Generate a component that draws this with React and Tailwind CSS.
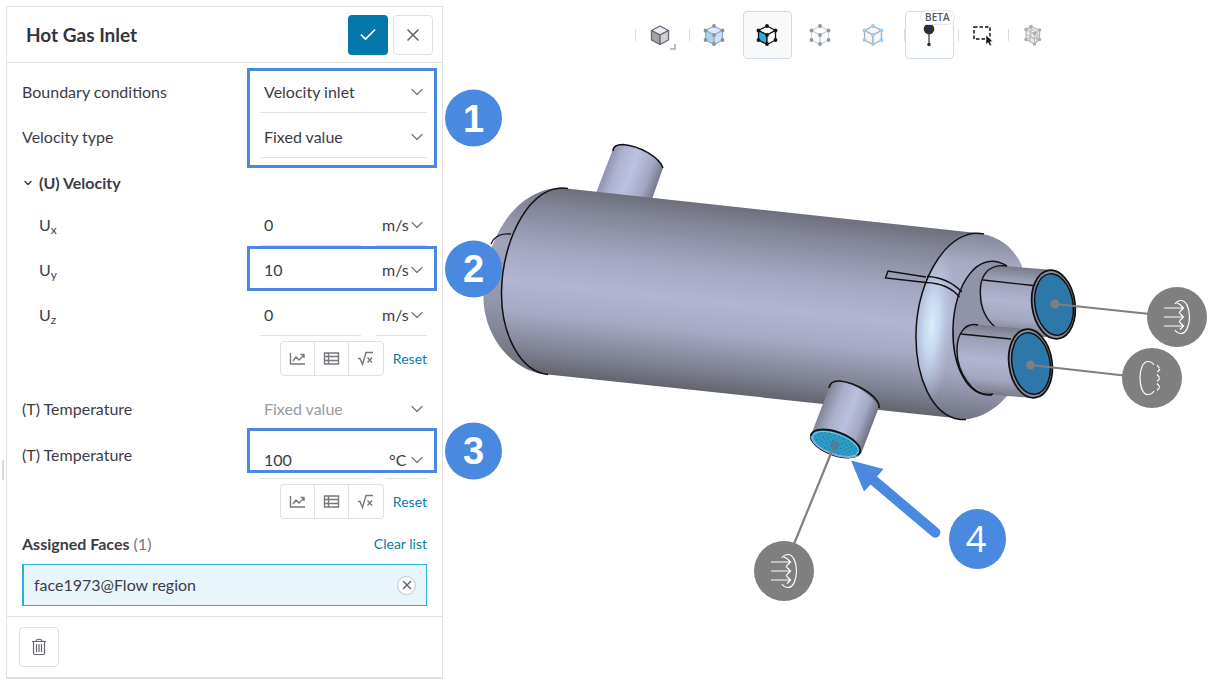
import React, { useState } from 'react';
import { Check, ChevronDown, X } from 'lucide-react';
import clsx from 'clsx';

const Callout = ({ number, className }) => (
  <div className={clsx('pointer-events-none absolute -right-2.5 z-10 w-[190px] border-[3px] border-[#4a89e0]', className)}>
    <span className="absolute left-full top-1/2 ml-[11px] flex size-[57px] -translate-y-1/2 items-center justify-center rounded-full bg-[#4a89e0] font-['Liberation_Sans',sans-serif] text-[38px] font-bold leading-none text-white">
      {number}
    </span>
  </div>
);

const SelectBox = ({ id, label, options, muted, className }) => (
  <div className={clsx('relative flex items-center', className)}>
    <select
      id={id}
      aria-label={label}
      className={clsx('h-full w-full appearance-none bg-transparent outline-none', muted ? 'text-[#9b9ba0]' : 'text-[#3c3c46]')}
    >
      {options.map((option) => (
        <option key={option}>{option}</option>
      ))}
    </select>
    <ChevronDown className="pointer-events-none absolute right-0 size-5 text-[#77777f]" strokeWidth={1.5} />
  </div>
);

const SelectRow = ({ id, label, options, muted }) => (
  <div className="flex h-[45px] items-stretch justify-between">
    <label htmlFor={id} className="flex items-center pt-[3px]">{label}</label>
    <SelectBox
      id={id}
      options={options}
      muted={muted}
      className={clsx('w-[167px] border-b pl-1 pt-[3px]', muted ? 'border-transparent' : 'border-[#e2e2e2]')}
    />
  </div>
);

const ValueRow = ({ id, label, value, unit, units, tall, indent, children }) => {
  const [current, setCurrent] = useState(value);

  return (
    <div className={clsx('relative flex items-stretch justify-between', tall ? 'h-[49px]' : 'h-[45px]')}>
      <label htmlFor={id} className={clsx('flex items-center', indent && 'pl-[17px] pt-[3px]')}>
        <span>{label}</span>
      </label>
      <div className={clsx('flex w-[167px] gap-[15px]', tall && 'pt-2')}>
        <input
          id={id}
          value={current}
          onChange={(e) => setCurrent(e.target.value)}
          className="w-0 min-w-0 flex-1 border-b border-[#e2e2e2] bg-transparent pl-1 pt-1 outline-none"
        />
        <SelectBox
          label={`${unit} unit`}
          options={units}
          className={clsx('border-b border-[#e2e2e2] pt-[3px]', tall ? 'w-[42px] pl-1' : 'w-[51px] pl-1.5')}
        />
      </div>
      {children}
    </div>
  );
};

const toolIcons = [
  {
    name: 'Edit as chart',
    draw: <path d="M1.500 3v11H16M4 11l3-4 3 3 5-5M11.500 4.500h3.500v3.500" />,
  },
  {
    name: 'Edit as table',
    draw: <path d="M1.500 3h14v11h-14zM5.500 3v11M1.500 6.500h14M1.500 10.500h14" />,
  },
  {
    name: 'Edit as formula',
    draw: <path d="M1 8.500h2l2.500 6L9 2.500h7M10.500 7.500l4.500 5M15 7.500l-4.500 5" />,
  },
];

const ToolRow = () => (
  <div className="mt-[5px] flex items-center justify-end text-[14px]">
    <div className="flex h-[35px] divide-x divide-[#e0e0e0] rounded border border-[#e0e0e0]">
      {toolIcons.map((icon) => (
        <button key={icon.name} type="button" aria-label={icon.name} className="flex w-[34px] items-center justify-center">
          <svg viewBox="0 0 17 17" className="size-[17px]" fill="none" stroke="#77777c" strokeWidth="1.400">
            {icon.draw}
          </svg>
        </button>
      ))}
    </div>
    <button type="button" className="ml-[9px] text-[#0a7cad]">Reset</button>
  </div>
);

const TrashIcon = () => (
  <svg viewBox="0 0 16 18" className="h-[18px] w-4" fill="none" stroke="#666672" strokeWidth="1.200">
    <path d="M1 3.500h14M5 3.500c0-3 6-3 6 0M2.500 3.500V15c0 1 .5 1.500 1.500 1.500h8c1 0 1.500-.5 1.500-1.500V3.500M5.500 6v8M8 6v8M10.500 6v8" />
  </svg>
);

const SettingsPanel = () => (
  <aside className="w-[437px] shrink-0 border border-b-2 border-[#e0e0e0] bg-white">
    <header className="flex h-14 items-center justify-between border-b border-[#e0e0e0] pl-[19px] pr-[9px]">
      <h1 className="text-[19px] font-bold text-[#34343e]">Hot Gas Inlet</h1>
      <div className="flex gap-[5px]">
        <button type="button" aria-label="Apply" className="flex size-10 items-center justify-center rounded bg-[#0478ab] text-white">
          <Check className="size-5" strokeWidth={2} />
        </button>
        <button type="button" aria-label="Close" className="flex size-10 items-center justify-center rounded border border-[#e0e0e0] text-[#666672]">
          <X className="size-5" strokeWidth={2} />
        </button>
      </div>
    </header>

    <div className="px-[15px] pb-2.5 pt-[5px]">
      <div className="relative">
        <SelectRow id="bc" label="Boundary conditions" options={['Velocity inlet', 'Pressure outlet', 'Wall']} />
        <SelectRow id="velocity-type" label="Velocity type" options={['Fixed value', 'Flow rate']} />
        <Callout number={1} className="-bottom-2.5 top-0" />
      </div>

      <button type="button" className="flex h-[43px] items-center gap-[5px] pt-1.5 font-bold">
        <ChevronDown className="size-3" strokeWidth={3} />
        (U) Velocity
      </button>
      <ValueRow id="ux" label={<>U<sub>x</sub></>} value="0" unit="Ux" units={['m/s', 'ft/s']} indent />
      <ValueRow id="uy" label={<>U<sub>y</sub></>} value="10" unit="Uy" units={['m/s', 'ft/s']} indent>
        <Callout number={2} className="inset-y-0" />
      </ValueRow>
      <ValueRow id="uz" label={<>U<sub>z</sub></>} value="0" unit="Uz" units={['m/s', 'ft/s']} indent />
      <ToolRow />

      <div className="mt-[9px]">
        <SelectRow id="temp-type" label="(T) Temperature" options={['Fixed value']} muted />
      </div>
      <ValueRow id="temp" label="(T) Temperature" value="100" unit="Temperature" units={['°C', 'K', '°F']} tall>
        <Callout number={3} className="bottom-1.5 -top-0.5" />
      </ValueRow>
      <ToolRow />

      <div className="flex h-[45px] items-center justify-between pt-1">
        <h2>
          <span className="font-bold">Assigned Faces</span> <span className="text-[#77777f]">(1)</span>
        </h2>
        <button type="button" className="text-[14px] text-[#0a7cad]">Clear list</button>
      </div>
      <div className="flex h-[42px] items-center justify-between border border-l-2 border-[#27b1dc] bg-[#e8f5fb] pl-2.5 pr-2.5">
        <span>face1973@Flow region</span>
        <button type="button" aria-label="Remove face" className="flex size-[19px] items-center justify-center rounded-full border border-[#c4c4c8] bg-white text-[#666672]">
          <X className="size-3.5" strokeWidth={2.5} />
        </button>
      </div>
    </div>

    <footer className="border-t border-[#e0e0e0] px-3 py-2.5">
      <button type="button" aria-label="Delete" className="flex size-10 items-center justify-center rounded border border-[#e0e0e0]">
        <TrashIcon />
      </button>
    </footer>
  </aside>
);

const CubeIcon = ({ line, top = 'none', left = 'none', right = 'none', dot }) => (
  <svg viewBox="0 0 22 22" className="size-[22px]" strokeLinejoin="round">
    <g stroke={line} strokeWidth="1.300">
      <path d="M11 2l8.500 4.500L11 11 2.500 6.500z" fill={top} />
      <path d="M2.500 6.500L11 11v9.500L2.500 16z" fill={left} />
      <path d="M19.500 6.500L11 11v9.500l8.500-4.500z" fill={right} />
    </g>
    {dot && (
      <g fill={dot}>
        {[[11, 2], [19.5, 6.5], [2.5, 6.5], [11, 11], [2.5, 16], [19.5, 16], [11, 20]].map(([x, y]) => (
          <circle key={`${x}-${y}`} cx={x} cy={y} r="1.900" />
        ))}
      </g>
    )}
  </svg>
);

const MeshIcon = () => (
  <svg viewBox="0 0 22 22" className="size-[22px]" strokeLinejoin="round">
    <path d="M9 2.500L17.500 6V15.500L12.500 20L4 15.500V5.500z" fill="#ececec" stroke="#b7b8ba" strokeWidth="1.200" />
    <path d="M4 5.500L12.500 9.500V20M12.500 9.500L17.500 6M9 2.500V13.500L4 15.500M9 13.500L17.500 15.500M4 10.500L12.500 15L17.500 11M8 7.500V17.500M6.500 4L15 8V17.500" fill="none" stroke="#b7b8ba" />
    <g fill="#adaeb0">
      {[[9, 2.5], [17.5, 6], [4, 5.5], [12.5, 9.5], [4, 15.500], [17.5, 15.5], [12.5, 20]].map(([x, y]) => (
        <circle key={`${x}-${y}`} cx={x} cy={y} r="1.800" />
      ))}
    </g>
  </svg>
);

const ToolButton = ({ label, active, children, className }) => (
  <button
    type="button"
    aria-label={label}
    className={clsx('relative flex h-12 w-[49px] items-center justify-center rounded border', active ? 'border-[#cbdcf2]' : 'border-transparent', className)}
  >
    {children}
  </button>
);

const Separator = () => <span className="h-3 w-px bg-[#dcdcdc]" />;

const Toolbar = () => (
  <nav className="flex items-center justify-center pl-[18px] pt-[11px]">
    <Separator />
    <ToolButton label="Render mode">
      <CubeIcon line="#66666e" top="#e9ebf2" left="#a3a3a6" right="#cfd0d4" />
      <svg viewBox="0 0 6 6" className="absolute bottom-2 right-2 size-1.5">
        <path d="M5 0v5H0" fill="none" stroke="#aaa" strokeWidth="1.500" />
      </svg>
    </ToolButton>
    <span className="w-1" />
    <Separator />
    <div className="flex gap-1">
      <ToolButton label="Select volumes">
        <CubeIcon line="#96acc8" top="#d9ebfa" left="#a6d4f2" right="#cfdff5" dot="#8d9096" />
      </ToolButton>
      <ToolButton label="Select faces" active className="bg-[#f9f9fa]">
        <CubeIcon line="#111" top="#fff" left="#27b1dc" right="#fff" dot="#111" />
      </ToolButton>
      <ToolButton label="Select nodes">
        <CubeIcon line="#c3d9f2" dot="#939599" />
      </ToolButton>
      <ToolButton label="Select edges">
        <CubeIcon line="#a9abb2" top="#f5f6f9" left="#f5f6f9" right="#f5f6f9" dot="#9ccbf3" />
      </ToolButton>
    </div>
    <span className="w-1.5" />
    <Separator />
    <ToolButton label="Probe" active>
      <svg viewBox="0 0 12 24" className="h-6 w-3">
        <path d="M6 8v13" stroke="#33343c" strokeWidth="1.200" />
        <circle cx="6" cy="6" r="5.300" fill="#2c2d35" />
        <circle cx="6" cy="21.500" r="1.800" fill="#2c2d35" />
      </svg>
      <span className="absolute -right-0.5 -top-0.5 rounded-full border border-[#e8e8ea] bg-white px-1 font-['Open_Sans',sans-serif] text-[10px] font-semibold leading-[13px] text-[#555763]">BETA</span>
    </ToolButton>
    <span className="w-1" />
    <Separator />
    <ToolButton label="Box selection">
      <svg viewBox="0 0 22 22" className="size-[22px]">
        <rect x="2" y="3" width="16" height="12" fill="none" stroke="#111" strokeWidth="1.500" strokeDasharray="3.500 2" />
        <path d="M14 11v9.500l2.200-2 1.600 3.200 1.700-.8-1.500-3.200h2.800z" fill="#111" stroke="#fff" strokeWidth=".5" />
      </svg>
    </ToolButton>
    <Separator />
    <ToolButton label="Mesh">
      <MeshIcon />
    </ToolButton>
  </nav>
);

const InletMarker = ({ x, y }) => (
  <g transform={`translate(${x} ${y})`}>
    <circle r="30" fill="#7f7f7f" />
    <g fill="none" stroke="#fff" strokeWidth="1.200">
      <path d="M-13 -9H6M-13 0H6M-13 9H6M3 -12.500L6.500 -9L3 -5.500M3 -3.500L6.500 0L3 3.500M3 5.500L6.500 9L3 12.500" />
      <path d="M-2 -13C0 -16 2 -16.500 4 -16.500C9 -16.500 12.500 -9 12.500 0S9 16.500 4 16.500C2 16.500 0 16 -2 13" />
      <path d="M3 -12.500L0 -14M3 -5.500L2 -3.500M3 3.500L2 5.500" />
    </g>
  </g>
);

const OutletMarker = ({ x, y }) => (
  <g transform={`translate(${x} ${y})`}>
    <circle r="30" fill="#7f7f7f" />
    <g fill="none" stroke="#fff" strokeWidth="1.200">
      <path d="M2 -13C0 -16 -2 -16.500 -4 -16.500C-9 -16.500 -12 -9 -12 0S-9 16.500 -4 16.500C-2 16.500 0 16 2 13" />
      <path d="M5 -13L8 -9L5 -5.500M5 -3.500L8 0L5 3.500M5 5.500L8 9L5 12.500" strokeDasharray="4 1" />
    </g>
  </g>
);

const ModelView = () => (
  <svg viewBox="443 59 788 620" className="w-full" role="img" aria-label="Heat exchanger model">
    <defs>
      <linearGradient id="body" gradientUnits="userSpaceOnUse" x1="740" y1="207" x2="720" y2="393">
        <stop offset="0" stopColor="#6d6f7b" />
        <stop offset=".12" stopColor="#84879a" />
        <stop offset=".35" stopColor="#a5a8c3" />
        <stop offset=".52" stopColor="#b1b5d2" />
        <stop offset=".68" stopColor="#a7aac5" />
        <stop offset=".88" stopColor="#7f8293" />
        <stop offset="1" stopColor="#62646e" />
      </linearGradient>
      <linearGradient id="cap" gradientUnits="userSpaceOnUse" x1="535" y1="190" x2="525" y2="374">
        <stop offset="0" stopColor="#7b7e8f" />
        <stop offset=".3" stopColor="#a1a4bb" />
        <stop offset=".6" stopColor="#9598ad" />
        <stop offset="1" stopColor="#6a6c78" />
      </linearGradient>
      <linearGradient id="head" gradientUnits="userSpaceOnUse" x1="985" y1="234" x2="965" y2="420">
        <stop offset="0" stopColor="#858899" />
        <stop offset=".16" stopColor="#a6aac3" />
        <stop offset=".45" stopColor="#b4b9d7" />
        <stop offset=".75" stopColor="#a5a8c3" />
        <stop offset="1" stopColor="#717483" />
      </linearGradient>
      <radialGradient id="shine" gradientUnits="userSpaceOnUse" cx="0" cy="0" r="1" gradientTransform="translate(932 325) rotate(5) scale(22 85)">
        <stop offset="0" stopColor="#d9eefa" />
        <stop offset=".35" stopColor="#c9dcf2" stopOpacity=".9" />
        <stop offset="1" stopColor="#b4b9d7" stopOpacity="0" />
      </radialGradient>
      <linearGradient id="nozzleTop" gradientUnits="userSpaceOnUse" x1="603" y1="165" x2="657" y2="185">
        <stop offset="0" stopColor="#8689a2" />
        <stop offset=".25" stopColor="#aeb3d1" />
        <stop offset=".5" stopColor="#bbc2e2" />
        <stop offset=".8" stopColor="#a3a7c2" />
        <stop offset="1" stopColor="#777a8f" />
      </linearGradient>
      <linearGradient id="nozzleLow" gradientUnits="userSpaceOnUse" x1="819" y1="405" x2="872" y2="426">
        <stop offset="0" stopColor="#777a8c" />
        <stop offset=".3" stopColor="#aaaec9" />
        <stop offset=".55" stopColor="#bac0df" />
        <stop offset=".8" stopColor="#a3a7c2" />
        <stop offset="1" stopColor="#6e7183" />
      </linearGradient>
      <linearGradient id="tube" x1=".5" y1="0" x2=".4" y2="1">
        <stop offset="0" stopColor="#747685" />
        <stop offset=".2" stopColor="#9b9eb5" />
        <stop offset=".5" stopColor="#b1b5d1" />
        <stop offset=".75" stopColor="#a3a6bf" />
        <stop offset="1" stopColor="#6d6f7d" />
      </linearGradient>
      <pattern id="dots" width="5" height="5" patternUnits="userSpaceOnUse">
        <circle cx="1.500" cy="1.500" r=".7" fill="#1a6384" />
        <circle cx="4" cy="4" r=".5" fill="#1a6384" />
      </pattern>
    </defs>

    {/* upper nozzle */}
    <path d="M613 149L596 193L651 202L663 168C659 158 640 146 623 144.500C618 144 614 145 613 149z" fill="url(#nozzleTop)" />
    <path d="M613 151C613 146 617 144.500 623 144.500C640 146 659 157 663 168" fill="none" stroke="#111" strokeWidth="1.500" />

    {/* left cap */}
    <path d="M562 188C519 187 483 235 483.500 298C484 338 514 374 550 374.500z" fill="url(#cap)" />
    <path d="M491 244C494 236 501 233 511 234" fill="none" stroke="#111" strokeWidth="1.300" />

    {/* shell */}
    <path d="M562 188L977 233L964 419L548 374.500C521 372 501 335 501.500 292C502 239 531 185 562 188z" fill="url(#body)" />
    <path d="M568 188.500C531 182 502 239 501.500 292C501 335 521 372 548 374.500" fill="none" stroke="#111" strokeWidth="1.500" />

    {/* right head */}
    <path d="M975 233C998 235 1013 246 1022 266L1022 370C1010 402 984 420 960 419.500C932 416 915 377 916 333C917 281 945 231 975 233z" fill="url(#head)" />
    <path d="M975 233C998 235 1013 246 1022 266L1022 370C1010 402 984 420 960 419.500C932 416 915 377 916 333C917 281 945 231 975 233z" fill="url(#shine)" />
    <path d="M984 234C950 226 917 277 916 333C915 377 932 416 960 419.500H966" fill="none" stroke="#111" strokeWidth="1.500" />
    <path d="M1007 266C978 248 954 285 953 328C952 364 966 397 992 395L1010 330z" fill="#9093a9" />
    <path d="M1007 266C978 248 954 285 953 328C952 364 966 397 992 395" fill="none" stroke="#111" strokeWidth="1.500" />
    <path d="M926 277L888 271L885.500 278L926 282.500M927 276.500C943 277 954 284 962 292M926 282.500C942 283 952 288 959.500 297" fill="none" stroke="#111" strokeWidth="1.400" />

    {/* upper tube */}
    <path d="M999 265.500L1054 270L1062 339L1002 332C977 318 973 270 999 265.500z" fill="url(#tube)" />
    <path d="M1007 266C985 263 979 280 980.500 296C981 310 987 320 995 327M983 280L1033 285.500" fill="none" stroke="#111" strokeWidth="1.400" />
    <ellipse cx="1053.500" cy="304.500" rx="21.500" ry="34.500" transform="rotate(-8 1053.500 304.500)" fill="#898ca0" stroke="#111" strokeWidth="1.800" />
    <ellipse cx="1054" cy="304.500" rx="19" ry="31" transform="rotate(-9 1054 304.500)" fill="#2d78a8" stroke="#111" strokeWidth="1.500" />

    {/* lower tube */}
    <path d="M970 324L1025 329L1034 398L986 394.500C966 383 956 364 957 345C958 333 963 324 970 324z" fill="url(#tube)" />
    <path d="M978 325C965 322 957 334 957 350C957 372 972 398 993 394M961 334L1011 339" fill="none" stroke="#111" strokeWidth="1.400" />
    <ellipse cx="1030.500" cy="363.500" rx="21.500" ry="34.500" transform="rotate(-8 1030.500 363.500)" fill="#898ca0" stroke="#111" strokeWidth="1.800" />
    <ellipse cx="1031" cy="363.500" rx="19" ry="31" transform="rotate(-9 1031 363.500)" fill="#2d78a8" stroke="#111" strokeWidth="1.500" />

    {/* lower nozzle */}
    <path d="M829 388L811 435L861 454L879 407C872 394 851 382 838 381C833 381 830 383 829 388z" fill="url(#nozzleLow)" />
    <path d="M829 388C830 382 834 380.500 840 381C857 383 876 395 879 405V408" fill="none" stroke="#111" strokeWidth="1.500" />
    <ellipse cx="835.500" cy="443.500" rx="26" ry="11.500" transform="rotate(20 835.500 443.500)" fill="#2b9dc7" stroke="#111" strokeWidth="1.800" />
    <ellipse cx="835.500" cy="444" rx="24" ry="10" transform="rotate(20 835.500 444)" fill="url(#dots)" stroke="#8cc4ec" strokeWidth="1" />
    <path d="M811 436C813 449 842 461 858 456" fill="none" stroke="#83a9dd" strokeWidth="1.500" />

    {/* boundary condition markers */}
    <g stroke="#7f7f7f" strokeWidth="2.200">
      <path d="M1055 304L1150 314M1030.500 365L1124 375.500M834 446L794 544" />
    </g>
    <circle cx="1055" cy="304" r="4.500" fill="#7f7f7f" />
    <circle cx="1030.500" cy="365" r="4.500" fill="#7f7f7f" />
    <circle cx="835" cy="445" r="4.500" fill="#4f7f98" />
    <InletMarker x={1177} y={317} />
    <OutletMarker x={1152} y={378} />
    <InletMarker x={784} y={571} />

    {/* pointer and step badge */}
    <path d="M851 460.500L883.500 469L877 476.500L938.500 528.500A5 5 0 0 1 932 536.500L870.500 484.500L864 491.500z" fill="#4a89e0" />
    <ellipse cx="977.500" cy="539" rx="28.500" ry="30" fill="#4a89e0" />
    <text x="976" y="551.500" textAnchor="middle" fill="#fff" fontSize="36" fontFamily="'Open Sans', sans-serif">4</text>
  </svg>
);

const App = () => (
  <div className="flex min-h-screen items-start bg-white pt-1.5 font-['Lato',sans-serif] text-[16px] leading-6 text-[#3c3c46]">
    <div className="w-1.5 shrink-0 pl-0.5 pt-[454px]">
      <div className="h-5 w-0.5 bg-[#dadada]" />
    </div>
    <SettingsPanel />
    <main className="-mt-1.5 min-w-0 flex-1">
      <Toolbar />
      <ModelView />
    </main>
  </div>
);

export default App;
